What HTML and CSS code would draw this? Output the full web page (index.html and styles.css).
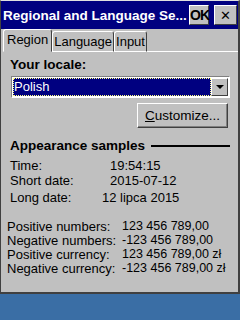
FILE: index.html
```html
<!DOCTYPE html>
<html lang="en">
<head>
    <meta charset="UTF-8">
    <title>Regional and Language Settings</title>
    <link rel="stylesheet" href="styles.css">
</head>
<body>
    <div class="window">
        <div class="titlebar">
            <span class="title">Regional and Language Se...</span>
            <button class="cap-btn ok">OK</button>
            <button class="cap-btn close">&#x2715;</button>
        </div>

        <div class="tabs">
            <div class="tab active">Region</div>
            <div class="tab">Language</div>
            <div class="tab">Input</div>
            <div class="tab-rest"></div>
        </div>

        <div class="panel">
            <div class="label-bold">Your locale:</div>
            <div class="combo">
                <div class="combo-field"><span>Polish</span></div>
                <div class="combo-arrow"></div>
            </div>
            <div class="btn-row">
                <button class="btn"><u>C</u>ustomize...</button>
            </div>

            <div class="group-head">
                <span>Appearance samples</span>
                <div class="rule"></div>
            </div>

            <div class="samples">
                <div class="row"><span class="key">Time:</span><span class="val v-time">19:54:15</span></div>
                <div class="row"><span class="key">Short date:</span><span class="val v-short">2015-07-12</span></div>
                <div class="row tall"><span class="key">Long date:</span><span class="val v-long">12 lipca 2015</span></div>
            </div>

            <div class="numbers">
                <div class="row"><span class="key">Positive numbers:</span><span class="val">123 456 789,00</span></div>
                <div class="row"><span class="key">Negative numbers:</span><span class="val">-123 456 789,00</span></div>
                <div class="row"><span class="key">Positive currency:</span><span class="val">123 456 789,00 zł</span></div>
                <div class="row"><span class="key">Negative currency:</span><span class="val">-123 456 789,00 zł</span></div>
            </div>
        </div>
    </div>
    <div class="desktop"></div>
</body>
</html>
```

FILE: styles.css
```css
* {
    margin: 0;
    padding: 0;
    box-sizing: border-box;
}

body {
    width: 240px;
    height: 320px;
    overflow: hidden;
    font-family: 'Liberation Sans', sans-serif;
    font-size: 13px;
    color: #000;
    background-color: #3a6ea5;
}

/* Window frame */
.window {
    height: 294px;
    display: flex;
    flex-direction: column;
    background-color: #c0c0c0;
    border-top: 1px solid #e0e0e0;
    border-left: 1px solid #404040;
    border-right: 2px solid #404040;
    border-bottom: 2px solid #404040;
}

.titlebar {
    height: 28px;
    display: flex;
    align-items: center;
    background-color: #000080;
    color: #fff;
    padding: 0 1px 0 2px;
}

.title {
    flex: 1;
    min-width: 0;
    font-weight: bold;
    font-size: 13.5px;
    white-space: nowrap;
    overflow: hidden;
}

.cap-btn {
    flex-shrink: 0;
    height: 20px;
    background-color: #c0c0c0;
    border: 1px solid;
    border-color: #fff #404040 #404040 #fff;
    font-family: 'Liberation Sans', sans-serif;
    color: #000;
}

.cap-btn.ok {
    width: 20px;
    font-weight: bold;
    font-size: 14px;
    letter-spacing: -1px;
    margin-right: 5px;
}

.cap-btn.close {
    width: 23px;
    font-size: 13px;
}

/* Tabs */
.tabs {
    display: flex;
    align-items: flex-end;
    height: 23px;
    padding-left: 2px;
}

.tab {
    height: 21px;
    padding: 0 1px;
    line-height: 20px;
    font-size: 13px;
    border: 1px solid;
    border-color: #fff #404040 #fff #fff;
    border-radius: 3px 3px 0 0;
}

.tab.active {
    height: 23px;
    padding: 0 3px;
    border-bottom-color: #c0c0c0;
}

.tab-rest {
    flex: 1;
    border-bottom: 1px solid #fff;
}

/* Panel */
.panel {
    flex: 1;
    padding: 5px 8px 0 5px;
}

.label-bold {
    font-weight: bold;
    font-size: 13.5px;
    padding-left: 4px;
}

.combo {
    display: flex;
    margin: 4px 0 0 5px;
    height: 22px;
    border: 1px solid;
    border-color: #808080 #fff #fff #808080;
    padding: 1px;
    background-color: #fff;
}

.combo-field {
    flex: 1;
    background-color: #000080;
    color: #fff;
    border: 1px dotted #ffff80;
    font-size: 13px;
    line-height: 16px;
}

.combo-arrow {
    width: 17px;
    background-color: #c0c0c0;
    border: 1px solid;
    border-color: #fff #404040 #404040 #fff;
    display: flex;
    align-items: center;
    justify-content: center;
}

.combo-arrow::after {
    content: "";
    border-left: 4px solid transparent;
    border-right: 4px solid transparent;
    border-top: 4px solid #000;
}

.btn-row {
    display: flex;
    justify-content: flex-end;
    margin-top: 5px;
    padding-right: 2px;
}

.btn {
    width: 91px;
    height: 25px;
    background-color: #c0c0c0;
    border: 1px solid;
    border-color: #fff #404040 #404040 #fff;
    box-shadow: inset -1px -1px #808080;
    font-family: 'Liberation Sans', sans-serif;
    font-size: 13.5px;
    color: #000;
}

.group-head {
    display: flex;
    align-items: center;
    margin-top: 10px;
    padding-left: 4px;
    font-weight: bold;
    font-size: 13.5px;
}

.rule {
    flex: 1;
    height: 2px;
    background-color: #000;
    margin-left: 6px;
}

.samples {
    margin-top: 5px;
    padding-left: 4px;
}

.row {
    display: flex;
    height: 15px;
    align-items: center;
    white-space: nowrap;
}

.samples .row.tall {
    height: 18px;
}

.samples .key {
    width: 96px;
}

.v-time { padding-left: 4px; }
.v-short { padding-left: 4px; }
.v-long { margin-left: -4px; }

.numbers {
    margin-top: 13px;
    padding-left: 1px;
}

.numbers .row {
    height: 14px;
}

.numbers .key {
    width: 115px;
}

.numbers .val {
    font-size: 12.5px;
}

.desktop {
    height: 26px;
}
```
